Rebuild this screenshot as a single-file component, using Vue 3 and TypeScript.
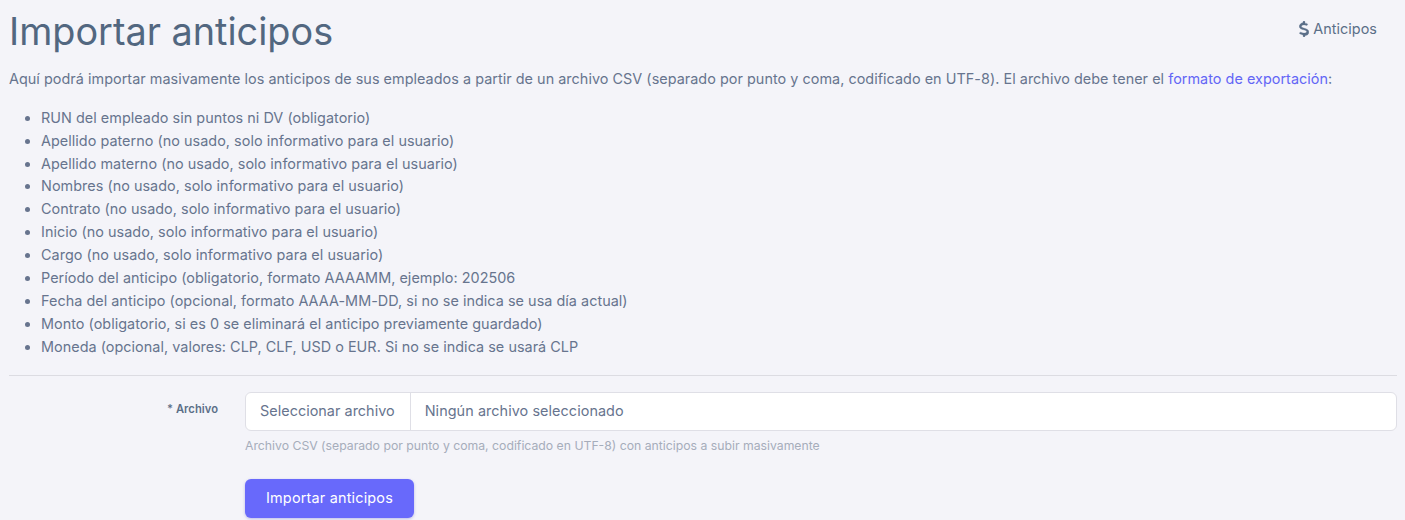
<script setup lang="ts">
const items: string[] = [
  'RUN del empleado sin puntos ni DV (obligatorio)',
  'Apellido paterno (no usado, solo informativo para el usuario)',
  'Apellido materno (no usado, solo informativo para el usuario)',
  'Nombres (no usado, solo informativo para el usuario)',
  'Contrato (no usado, solo informativo para el usuario)',
  'Inicio (no usado, solo informativo para el usuario)',
  'Cargo (no usado, solo informativo para el usuario)',
  'Período del anticipo (obligatorio, formato AAAAMM, ejemplo: 202506',
  'Fecha del anticipo (opcional, formato AAAA-MM-DD, si no se indica se usa día actual)',
  'Monto (obligatorio, si es 0 se eliminará el anticipo previamente guardado)',
  'Moneda (opcional, valores: CLP, CLF, USD o EUR. Si no se indica se usará CLP',
]
</script>

<template>
  <main class="page">
    <header class="head">
      <h1 class="title">Importar anticipos</h1>
      <a class="link-btn">
        <svg class="dollar" viewBox="0 0 320 512" width="10" height="16" aria-hidden="true">
          <path fill="currentColor" stroke="currentColor" stroke-width="8" d="M160 0c17.700 0 32 14.300 32 32v35.700c1.600.2 3.100.4 4.700.7 10.600 1.600 42.100 6.700 55.100 10 17.100 4.300 27.500 21.700 23.200 38.900s-21.700 27.500-38.900 23.200c-9.300-2.400-37.600-7-48.900-8.700-32.100-4.700-59.600-2.400-78.500 6.100-18.600 8.200-25.800 18.300-27.700 29-2 11.900-.3 18.500 1.500 22.500 2 4.200 5.800 9 13.500 14.100 17.100 11.200 43.300 18.900 77.300 28.100l1.800.5c30 8.100 66.800 18 94.100 36 15 9.800 29.200 23.500 38 42.300 8.900 19.100 10.800 40.400 6.700 63-7.400 41.700-36.200 69.700-72 84.800-15.100 6.400-31.500 10.600-48.500 12.800V480c0 17.700-14.300 32-32 32s-32-14.300-32-32v-34.900c-.4-.1-.9-.1-1.300-.2-24.700-3.800-65.500-14.600-92.400-26.600-16.100-7.200-23.400-26.100-16.200-42.200s26.100-23.400 42.200-16.200c20.800 9.200 55.800 18.500 76.200 21.700 32.400 4.800 59.100 2.100 77-5.500 17-7.200 24.800-17.600 26.900-29.400 1.800-10.400.3-16.400-1.600-20.500-2-4.300-5.900-9.200-13.600-14.300-17.200-11.200-43.500-18.900-77.500-28.100l-1.800-.5c-29.900-8.100-66.600-18.100-93.900-36-15-9.800-29.100-23.600-37.900-42.400-8.800-19.100-10.600-40.400-6.500-63C35.600 101 62.200 73.500 98 57.900c11.200-4.900 23.300-8.500 30-10.300V32c0-17.700 14.300-32 32-32z"/>
        </svg>
        <span>Anticipos</span>
      </a>
    </header>

    <p class="intro">Aquí podrá importar masivamente los anticipos de sus empleados a partir de un archivo CSV (separado por punto y coma, codificado en UTF-8). El archivo debe tener el <a class="accent">formato de exportación</a>:</p>

    <ul class="fields">
      <li v-for="item in items" :key="item">{{ item }}</li>
    </ul>

    <hr class="rule" />

    <form class="form" @submit.prevent>
      <label class="label">* Archivo</label>
      <div class="control">
        <div class="file">
          <span class="file-btn">Seleccionar archivo</span>
          <span class="file-name">Ningún archivo seleccionado</span>
        </div>
        <p class="help">Archivo CSV (separado por punto y coma, codificado en UTF-8) con anticipos a subir masivamente</p>
        <button class="submit" type="submit">Importar anticipos</button>
      </div>
    </form>
  </main>
</template>

<style>
body { background: #f4f4f9; }
</style>

<style scoped>
.page {
  box-sizing: border-box;
  height: 520px;
  overflow: hidden;
  padding: 0 8px 0 9px;
  font-family: Inter, "Liberation Sans", sans-serif;
  font-size: 14.4px;
  letter-spacing: 0.035px;
  line-height: 22.9px;
  color: #67748e;
}
.head {
  display: flex;
  justify-content: space-between;
  align-items: flex-start;
  height: 60px;
}
.title {
  margin: 9px 0 0;
  font-size: 37.8px;
  line-height: 44px;
  font-weight: 400;
  letter-spacing: 0;
  color: #526780;
}
.link-btn {
  display: flex;
  align-items: center;
  gap: 4px;
  margin: 18px 20px 0 0;
  color: #5b6f88;
}
.dollar { display: block; }
.intro { margin: 8px 0 15.8px; }
.accent { color: #6366f6; }
.fields { margin: 0; padding: 0 0 0 32px; }
.rule {
  margin: 16.6px 0 16px;
  border: 0;
  border-top: 1px solid #dcdce2;
}
.form {
  display: grid;
  grid-template-columns: 236px 1fr;
}
.label {
  margin: 6px 27px 0 0;
  text-align: right;
  font-size: 11.2px;
  font-weight: 600;
  line-height: 22px;
  color: #5b6f88;
}
.control { min-width: 0; }
.file {
  display: flex;
  height: 39px;
  box-sizing: border-box;
  background: #fff;
  border: 1px solid #dfdfe6;
  border-radius: 6px;
  line-height: 36px;
}
.file-btn { padding: 0 15px 0 14px; border-right: 1px solid #dfdfe6; }
.file-name { padding: 0 14px; letter-spacing: 0.07px; }
.help {
  margin: 4px 0 0;
  font-size: 12.24px;
  letter-spacing: 0;
  line-height: 22px;
  color: #a6adbb;
}
.submit {
  display: block;
  margin-top: 22px;
  width: 169px;
  height: 39px;
  padding: 0;
  border: 0;
  border-radius: 6px;
  background: #6869fb;
  color: #fff;
  font: inherit;
  letter-spacing: 0.2px;
  box-shadow: 0 1px 3px rgba(80, 80, 200, 0.35);
}
</style>
